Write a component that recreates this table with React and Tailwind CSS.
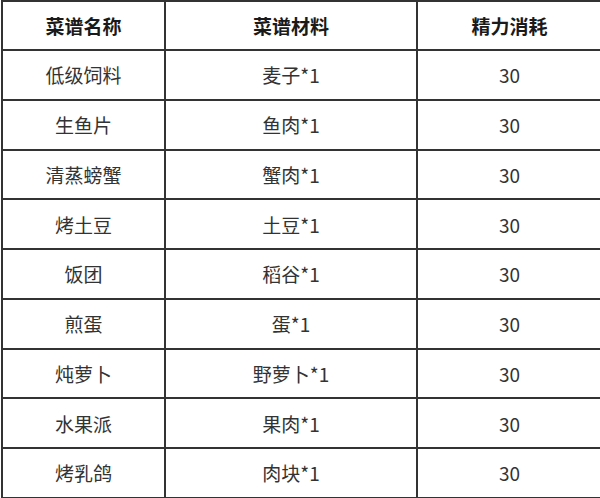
import React from "react";

const rows = [
  ["低级饲料", "麦子*1", "30"],
  ["生鱼片", "鱼肉*1", "30"],
  ["清蒸螃蟹", "蟹肉*1", "30"],
  ["烤土豆", "土豆*1", "30"],
  ["饭团", "稻谷*1", "30"],
  ["煎蛋", "蛋*1", "30"],
  ["炖萝卜", "野萝卜*1", "30"],
  ["水果派", "果肉*1", "30"],
  ["烤乳鸽", "肉块*1", "30"],
];

function Row({ cells, header }) {
  return (
    <div
      className={`flex border-b-2 border-[#333] ${header ? "h-[49px] font-bold text-[#1a1a1a]" : "h-[49.75px] text-[#333]"}`}
    >
      <div className="w-[163px] shrink-0 border-r-2 border-[#333] flex items-center justify-center">
        {cells[0]}
      </div>
      <div className="w-[252px] shrink-0 border-r-2 border-[#333] flex items-center justify-center">
        {cells[1]}
      </div>
      <div className="w-[183px] shrink-0 flex items-center justify-center">
        {cells[2]}
      </div>
    </div>
  );
}

export default function App() {
  return (
    <div className="w-[600px] h-[498px] overflow-hidden bg-white">
      <div
        className="ml-[1px] border-l-2 border-t-2 border-[#333] w-[603px] text-[19px] leading-none"
        style={{ fontFamily: '"Noto Sans CJK SC", "Noto Sans", sans-serif' }}
      >
        <Row header cells={["菜谱名称", "菜谱材料", "精力消耗"]} />
        {rows.map((r, i) => (
          <Row key={i} cells={r} />
        ))}
      </div>
    </div>
  );
}
